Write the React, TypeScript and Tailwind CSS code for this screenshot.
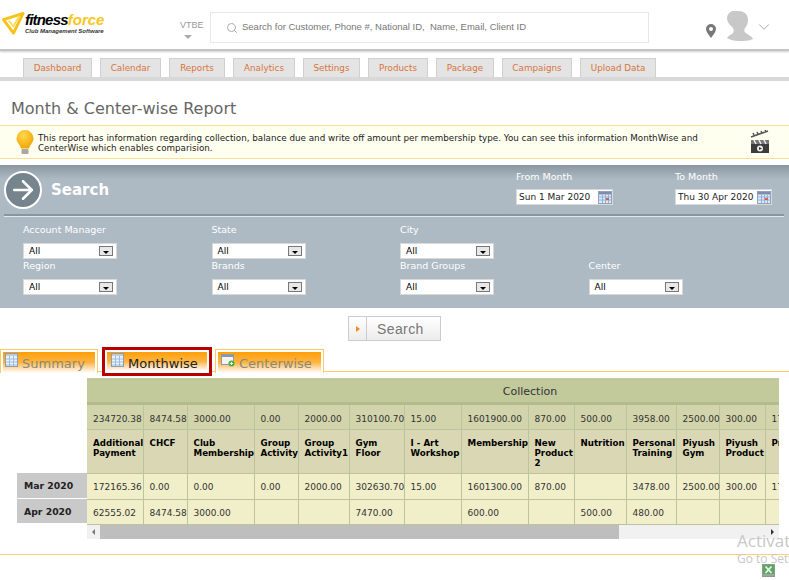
import { ChevronDown, Search, ArrowRight } from "lucide-react";

const verdana = "font-['DejaVu_Sans',sans-serif]";

const navTabs = [
  { label: "Dashboard", width: "w-[69px]" },
  { label: "Calendar", width: "w-[61px]" },
  { label: "Reports", width: "w-[56px]" },
  { label: "Analytics", width: "w-[62px]" },
  { label: "Settings", width: "w-[57px]" },
  { label: "Products", width: "w-[60px]" },
  { label: "Package", width: "w-[58px]" },
  { label: "Campaigns", width: "w-[70px]" },
  { label: "Upload Data", width: "w-[76px]" },
];

const filters = [
  { label: "Account Manager", col: "col-start-1" },
  { label: "State", col: "col-start-2" },
  { label: "City", col: "col-start-3" },
  { label: "Region", col: "col-start-1" },
  { label: "Brands", col: "col-start-2" },
  { label: "Brand Groups", col: "col-start-3" },
  { label: "Center", col: "col-start-4" },
];

const colWidths = [56, 44, 67, 44, 51, 55, 57, 67, 46, 52, 50, 43, 46, 60];

const totals = ["234720.38", "8474.58", "3000.00", "0.00", "2000.00", "310100.70", "15.00", "1601900.00", "870.00", "500.00", "3958.00", "2500.00", "300.00", "17000.00"];
const heads = ["Additional Payment", "CHCF", "Club Membership", "Group Activity", "Group Activity1", "Gym Floor", "I - Art Workshop", "Membership", "New Product 2", "Nutrition", "Personal Training", "Piyush Gym", "Piyush Product", "Product"];
const mar = ["172165.36", "0.00", "0.00", "0.00", "2000.00", "302630.70", "15.00", "1601300.00", "870.00", "", "3478.00", "2500.00", "300.00", "17000.00"];
const apr = ["62555.02", "8474.58", "3000.00", "", "", "7470.00", "", "600.00", "", "500.00", "480.00", "", "", ""];

function Logo() {
  return (
    <div className="flex items-center">
      <svg width="23" height="23" viewBox="0 0 24 24">
        <path d="M1.500 8 L22 1.500 L12 22 Z" fill="none" stroke="#f5c21a" strokeWidth="3" strokeLinejoin="round" />
        <path d="M7 9 L12 15 L18 4" fill="none" stroke="#fbdc5c" strokeWidth="2" />
      </svg>
      <div className="flex flex-col font-['Liberation_Sans',sans-serif] italic font-bold">
        <div className="whitespace-nowrap text-[15px] leading-[15px] text-black">
          <span className="tracking-[-0.8px]">fitness</span>
          <span className="text-[#f7c623]">force</span>
        </div>
        <div className="whitespace-nowrap text-[6px] leading-[8px] text-[#333]">Club Management Software</div>
      </div>
    </div>
  );
}

function PinIcon() {
  return (
    <svg width="10" height="14" viewBox="0 0 10 14">
      <path fillRule="evenodd" d="M5 0a5 5 0 0 1 5 5c0 3-3 6-5 9-2-3-5-6-5-9a5 5 0 0 1 5-5zm0 3a2 2 0 1 0 0 4 2 2 0 0 0 0-4z" fill="#787878" />
    </svg>
  );
}

function AvatarIcon() {
  return (
    <svg width="30" height="30" viewBox="0 0 30 30">
      <path d="M14 0c6 0 10 3 10 9 0 3-1 6-3 8-1 2-1 4 1 5 2 2 6 3 7 6-4 2-9 2-14 2-5 0-9-1-12-3 1-2 3-3 5-4 2-2 2-4 1-6-3-3-6-6-6-10 0-5 5-8 11-8z" fill="#c8c8c8" />
    </svg>
  );
}

function BulbIcon() {
  return (
    <svg width="18" height="25" viewBox="0 0 18 25">
      <defs>
        <radialGradient id="bulb" cx="0.4" cy="0.3" r="0.8">
          <stop offset="0" stopColor="#ffd84a" />
          <stop offset="1" stopColor="#f0a000" />
        </radialGradient>
      </defs>
      <path d="M9 0a8.500 8.500 0 0 1 8.500 8.500c0 4-3.500 6-4.500 10H5c-1-4-4.500-6-4.500-10A8.500 8.500 0 0 1 9 0z" fill="url(#bulb)" />
      <rect x="5.500" y="19" width="7" height="5" rx="1" fill="#a8a8a0" />
    </svg>
  );
}

function ClapperIcon() {
  return (
    <svg width="20" height="24" viewBox="0 0 20 24">
      <path d="M1 7l17-6M3 3l1 2M7 2l1 2M11 1l1 2M15 0l1 2" stroke="#555" strokeWidth="1.500" fill="none" />
      <rect x="1" y="10" width="18" height="13" fill="#3c3c3c" />
      <path d="M1 10h18v4H1z" fill="#777" />
      <path d="M4 10l2 4M9 10l2 4M14 10l2 4" stroke="#eee" strokeWidth="1.500" />
      <circle cx="10" cy="18.500" r="3" fill="#eee" />
      <path d="M9 17l3 1.500-3 1.500z" fill="#333" />
    </svg>
  );
}

function CalendarIcon() {
  return (
    <svg width="14" height="13" viewBox="0 0 14 13">
      <rect x="0.500" y="0.500" width="13" height="12" fill="#dfe9f5" stroke="#8ea3bd" />
      <rect x="1" y="1" width="12" height="2.500" fill="#7e8ea8" />
      <path d="M1 6h12M1 9h12M4.500 4v8M7.500 4v8M10.500 4v8" stroke="#8fb0dc" strokeWidth="1" />
      <rect x="8" y="7" width="3" height="2" fill="#e0603a" />
    </svg>
  );
}

function GridIcon() {
  return (
    <svg width="13" height="14" viewBox="0 0 13 14">
      <rect x="0.500" y="0.500" width="12" height="13" fill="#eaf2fa" stroke="#8d9db0" />
      <rect x="1" y="1" width="11" height="2" fill="#b9cbe0" />
      <path d="M1 6h11M1 9h11M1 12h11M4.500 3v10M8.500 3v10" stroke="#9dbcdc" strokeWidth="1" />
    </svg>
  );
}

function AddWindowIcon() {
  return (
    <svg width="14" height="14" viewBox="0 0 14 14">
      <rect x="0.500" y="1.500" width="12" height="10" fill="#f4f4f4" stroke="#8d9db0" />
      <rect x="1" y="2" width="11" height="2" fill="#8a97ab" />
      <circle cx="10.500" cy="10.500" r="3" fill="#49b048" />
      <path d="M10.500 9v3M9 10.500h3" stroke="#fff" strokeWidth="1" />
    </svg>
  );
}

function ExcelIcon() {
  return (
    <svg width="13" height="13" viewBox="0 0 13 13">
      <rect x="0.500" y="0.500" width="12" height="12" fill="#5aa662" stroke="#8a9a8c" />
      <rect x="1" y="10" width="11" height="2" fill="#9aa89c" />
      <path d="M3.500 2.500l6 6.500M9.500 2.500l-6 6.500" stroke="#eaf6ea" strokeWidth="1.800" />
    </svg>
  );
}

function SelectBox({ value = "All" }: { value?: string }) {
  return (
    <div className="flex h-[16px] w-[94px] items-center justify-between border border-[#d9d9d9] bg-white pl-[5px] pr-[3px] text-[9px] text-black">
      <span className="pt-[2px]">{value}</span>
      <span className="flex h-[10px] w-[14px] items-end justify-center border border-[#777] bg-[#e8e8e8] pb-[1px]">
        <span className="h-0 w-0 border-x-[3px] border-t-[3px] border-x-transparent border-t-black" />
      </span>
    </div>
  );
}

function DateBox({ label, value }: { label: string; value: string }) {
  return (
    <div className="-mt-[1px] flex w-[97px] flex-col">
      <div className="h-[19px] text-[9.500px] leading-[14px] text-white">{label}</div>
      <div className="flex h-[16px] items-center justify-between border border-[#d9d9d9] bg-white pl-[2px] text-[9px] text-[#222]">
        <span className="pt-[1px]">{value}</span>
        <CalendarIcon />
      </div>
    </div>
  );
}

function ReportTab({ label, icon, active, width, indent }: { label: string; icon: React.ReactNode; active?: boolean; width: string; indent: string }) {
  return (
    <div className={`${width} ${active ? "border-[3px] border-[#b80000] p-[2px]" : "border border-b-0 border-[#ffc966] p-[2px] pb-0"} shrink-0 bg-white`}>
      <div className={`flex items-start gap-[4px] bg-gradient-to-b from-[#ff9f00] via-[#ffb43c] to-white ${indent} ${active ? "h-[19px] text-[#222]" : "h-[21px] text-[#8a8a7c]"}`}>
        <span className="pt-[1px]">{icon}</span>
        <span className="pt-[3px] text-[13px] leading-[18px]">{label}</span>
      </div>
    </div>
  );
}

function DataRow({ cells, bold, className, pad }: { cells: string[]; bold?: boolean; className: string; pad: string }) {
  return (
    <tr className={className}>
      {cells.map((c, i) => (
        <td key={i} className={`border-r border-b border-[#bcc499] align-top pl-[6px] ${pad} ${bold ? "text-[8.700px] font-bold leading-[10px] text-black" : "whitespace-nowrap text-[#333]"}`}>
          {c}
        </td>
      ))}
    </tr>
  );
}

export default function App() {
  return (
    <div className={`relative h-[580px] w-[789px] overflow-hidden bg-white ${verdana}`}>
      {/* header */}
      <header className="relative flex h-[51px] items-start border-b-[2px] border-[#c4c4c4] font-['Liberation_Sans',sans-serif] shadow-[0_1px_2px_rgba(0,0,0,0.2)]">
        <div className="ml-[2px] mt-[12px] w-[178px]">
          <Logo />
        </div>
        <div className="mt-[18px] flex w-[30px] flex-col text-[9px] leading-[14px] text-[#999]">
          <span>VTBE</span>
          <span className="ml-[4px] mt-[3px] h-0 w-0 border-x-[4px] border-t-[4px] border-x-transparent border-t-[#aaa]" />
        </div>
        <div className="mt-[12px] flex h-[31px] w-[439px] items-center border border-[#e8e8e8] pl-[15px] text-[9.500px] text-[#777]">
          <Search size={12} className="text-[#aaa]" />
          <span className="ml-[4px] whitespace-pre">Search for Customer, Phone #, National ID,  Name, Email, Client ID</span>
        </div>
        <div className="ml-[57px] mt-[24px]">
          <PinIcon />
        </div>
        <div className="ml-[8px] mt-[11px]">
          <AvatarIcon />
        </div>
        <ChevronDown size={18} strokeWidth={1} className="ml-[1px] mt-[18px] text-[#888]" />
      </header>

      {/* main nav */}
      <nav className="flex h-[30px] items-end gap-[8px] border-b-[4px] border-b-[#d8d8d8] pl-[23px]">
        {navTabs.map((t) => (
          <div key={t.label} className={`${t.width} flex h-[19px] items-center justify-center border border-b-0 border-[#cfcfcf] bg-[#e4e4e4] pt-[2px] text-[8.800px] text-[#d8743c]`}>
            {t.label}
          </div>
        ))}
      </nav>

      <h1 className="pl-[11px] pt-[18px] text-[16px] leading-[20px] text-[#666]">Month &amp; Center-wise Report</h1>

      {/* hint */}
      <div className="mt-[6px] flex h-[34px] items-center border-y border-[#fbe08a] bg-[#fffff0] pl-[16px]">
        <BulbIcon />
        <p className="ml-[4px] w-[712px] pt-[1px] text-[8.750px] leading-[10px] text-[#222]">
          This report has information regarding collection, balance due and write off amount per membership type. You can see this information MonthWise and CenterWise which enables comparision.
        </p>
        <ClapperIcon />
      </div>

      {/* search panel */}
      <section className="mt-[6px] h-[143px] bg-gradient-to-b from-[#8b97a0] via-[#adbac4] via-[10%] to-[#adbac4] pl-[4px] pr-[5px] pt-[6px]">
        <div className="flex h-[43px] items-start">
          <div className="flex h-[38px] w-[38px] items-center justify-center rounded-full border-[2px] border-white bg-[#76848e]">
            <ArrowRight size={30} strokeWidth={2} className="text-white" />
          </div>
          <div className="ml-[9px] w-[465px] pt-[9px] text-[15px] font-bold leading-[20px] text-white">Search</div>
          <DateBox label="From Month" value="Sun 1 Mar 2020" />
          <div className="w-[62px]" />
          <DateBox label="To Month" value="Thu 30 Apr 2020" />
        </div>
        <div className="h-[3px] border-t-[2px] border-b border-t-[#8a969f] border-b-[#e3e8ec]" />
        <div className="ml-[19px] mt-[6px] grid grid-cols-[188.500px_188.500px_188.500px_188.500px]">
          {filters.map((f) => (
            <div key={f.label} className={`${f.col} flex h-[36px] flex-col`}>
              <div className="h-[20px] text-[9.500px] leading-[14px] text-white">{f.label}</div>
              <SelectBox />
            </div>
          ))}
        </div>
      </section>

      {/* search button */}
      <div className="ml-[348px] mt-[8px] flex h-[25px] w-[93px] items-center border border-[#ccc] bg-gradient-to-b from-white to-[#ececec] font-['Liberation_Sans',sans-serif]">
        <div className="flex h-full w-[18px] items-center justify-center border-r border-[#ccc]">
          <span className="h-0 w-0 border-y-[3px] border-l-[4px] border-y-transparent border-l-[#f08a20]" />
        </div>
        <span className="ml-[10px] pt-[1px] text-[14px] tracking-[0.4px] text-[#777]">Search</span>
      </div>

      {/* report tabs */}
      <div className="relative mt-[6px] flex h-[31px] items-start gap-[4px]">
        <div className="absolute left-0 right-0 top-[24px] border-b border-[#ffc966]" />
        <div className="relative mt-[2px]">
          <ReportTab label="Summary" icon={<GridIcon />} width="w-[98px]" indent="pl-[2px]" />
        </div>
        <div className="relative">
          <ReportTab label="Monthwise" icon={<GridIcon />} active width="w-[110px]" indent="pl-[4px]" />
        </div>
        <div className="relative -ml-[1px] mt-[2px]">
          <ReportTab label="Centerwise" icon={<AddWindowIcon />} width="w-[109px]" indent="pl-[3px]" />
        </div>
      </div>

      {/* table */}
      <div className="ml-[17px] flex w-[762px] text-[9px]">
        <div className="w-[70px] shrink-0 pt-[95px] text-[9.300px] font-bold text-[#222]">
          <div className="flex h-[26px] items-center border-b border-white bg-[#c9c9c9] pl-[7px]">Mar 2020</div>
          <div className="flex h-[25px] items-center border-b border-white bg-[#c9c9c9] pl-[7px] pt-[1px]">Apr 2020</div>
        </div>
        <div className="w-[692px] overflow-hidden">
          <div className="flex h-[27px] items-center justify-center border-b-[3px] border-[#b3bb8d] bg-[#c2ca9c] pl-[194px] pt-[4px] text-[11px] text-[#333]">Collection</div>
          <table className="w-[738px] table-fixed border-collapse">
            <colgroup>
              {colWidths.map((w, i) => (
                <col key={i} style={{ width: w }} />
              ))}
            </colgroup>
            <tbody>
              <DataRow cells={totals} pad="pt-[8px]" className="h-[24px] bg-[#d2d4ab]" />
              <DataRow cells={heads} bold pad="pt-[8px]" className="h-[44px] bg-[#dad8b4]" />
              <DataRow cells={mar} pad="pt-[7px]" className="h-[26px] bg-[#f1efc9]" />
              <DataRow cells={apr} pad="pt-[7px]" className="h-[25px] bg-[#f1efc9]" />
            </tbody>
          </table>
          <div className="flex h-[14px] items-center bg-[#f1f1f1]">
            <div className="flex w-[13px] justify-center">
              <span className="h-0 w-0 border-y-[3px] border-r-[3px] border-y-transparent border-r-[#777]" />
            </div>
            <div className="h-full w-[519px] bg-[#bebebe]" />
            <div className="flex flex-1 justify-end pr-[5px]">
              <span className="h-0 w-0 border-y-[3px] border-l-[3px] border-y-transparent border-l-[#333]" />
            </div>
          </div>
        </div>
      </div>

      <div className="mt-[15px] border-t border-[#ffcf70]" />
      <div className="mt-[9px] flex justify-end pr-[14px]">
        <ExcelIcon />
      </div>

      {/* activation watermark */}
      <div className="absolute left-[737px] top-[531px] whitespace-nowrap font-['Open_Sans',sans-serif] text-[#c8c8c8]">
        <div className="text-[17px] leading-[20px]">Activate</div>
        <div className="pt-[1px] text-[12px] leading-[14px]">Go to Settings</div>
      </div>
    </div>
  );
}
